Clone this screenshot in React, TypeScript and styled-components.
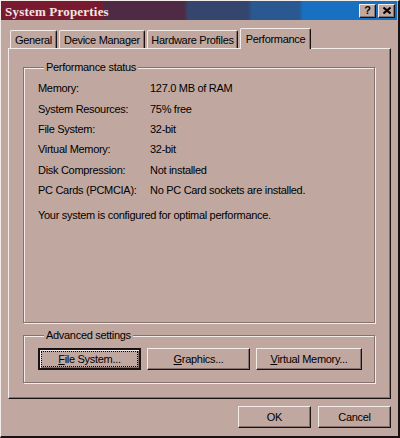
import { Fragment } from "react";
import styled, { createGlobalStyle, css } from "styled-components";

const FACE = "#c0a8a0";
const LIGHT = "#f4ece8";
const SHADOW = "#847270";
const DARK = "#1a1212";

const GlobalStyle = createGlobalStyle`
  html, body {
    margin: 0;
    padding: 0;
    background: ${FACE};
  }
  body {
    font-family: "Liberation Sans", Arial, sans-serif;
    font-size: 11px;
    letter-spacing: -0.3px;
    color: #000;
  }
`;

const Window = styled.div`
  box-sizing: border-box;
  width: 400px;
  height: 438px;
  background: ${FACE};
  border-left: 1px solid ${LIGHT};
  border-top: 1px solid ${LIGHT};
  border-right: 2px solid ${DARK};
  border-bottom: 2px solid ${DARK};
  display: flex;
  flex-direction: column;
`;

const TitleBar = styled.div`
  height: 19px;
  margin-right: 1px;
  display: flex;
  align-items: center;
  justify-content: space-between;
  padding: 0 2px 0 4px;
  background: linear-gradient(
    90deg,
    #7a1a30 0 100px,
    #4f2a44 104px 183px,
    #34466e 187px 247px,
    #2a5890 251px 298px,
    #1870c0 302px
  );
`;

const Title = styled.span`
  font-family: "Liberation Serif", "Times New Roman", serif;
  font-weight: bold;
  font-size: 13px;
  letter-spacing: 0.2px;
  padding-top: 2px;
  color: #f2e6e0;
`;

const CaptionButtons = styled.div`
  display: flex;
  gap: 2px;
`;

const CaptionButton = styled.div`
  box-sizing: border-box;
  width: 17px;
  height: 14px;
  background: ${FACE};
  border-top: 1px solid ${LIGHT};
  border-left: 1px solid ${LIGHT};
  border-right: 1px solid ${DARK};
  border-bottom: 1px solid ${DARK};
  box-shadow: inset -1px -1px 0 ${SHADOW};
  display: flex;
  align-items: center;
  justify-content: center;
  font-weight: bold;
  font-size: 11px;
  line-height: 1;
  color: #000;
`;

const Body = styled.div`
  flex: 1;
  display: flex;
  flex-direction: column;
  padding: 8px 6px 0 7px;
`;

const TabStrip = styled.div`
  height: 20px;
  display: flex;
  align-items: flex-end;
  gap: 2px;
  padding-left: 2px;
`;

const Tab = styled.div<{ $w: number; $active?: boolean }>`
  box-sizing: border-box;
  width: ${(p) => p.$w}px;
  height: 18px;
  padding-top: 3px;
  text-align: center;
  background: ${FACE};
  border-left: 1px solid ${LIGHT};
  border-top: 1px solid ${LIGHT};
  border-right: 1px solid ${DARK};
  border-radius: 2px 2px 0 0;
  box-shadow: inset -1px 0 0 ${SHADOW};
  white-space: nowrap;
  ${(p) =>
    p.$active &&
    css`
      height: 21px;
      margin-bottom: -1px;
      padding-top: 4px;
      position: relative;
      z-index: 1;
    `}
`;

const Panel = styled.div`
  box-sizing: border-box;
  width: 383px;
  height: 351px;
  border-left: 1px solid ${LIGHT};
  border-top: 1px solid ${LIGHT};
  border-right: 1px solid ${DARK};
  border-bottom: 1px solid ${DARK};
  box-shadow: inset -1px -1px 0 ${SHADOW};
  display: flex;
  flex-direction: column;
  gap: 6px;
  padding: 12px 15px 15px 14px;
`;

const Group = styled.fieldset<{ $grow?: boolean }>`
  margin: 0;
  min-width: 0;
  border: 1px solid ${SHADOW};
  box-shadow: inset 1px 1px 0 ${LIGHT}, 1px 1px 0 ${LIGHT};
  ${(p) =>
    p.$grow &&
    css`
      flex: 1;
    `}
`;

const Legend = styled.legend`
  margin-left: 6px;
  padding: 0 2px;
  background: ${FACE};
  line-height: 13px;
`;

const StatusGroup = styled(Group)`
  padding: 4px 14px 0 14px;
`;

const InfoGrid = styled.div`
  display: grid;
  grid-template-columns: 112px 1fr;
  grid-auto-rows: 20.4px;
  align-items: center;
`;

const Message = styled.div`
  margin-top: 9px;
`;

const AdvancedGroup = styled(Group)`
  padding: 6px 0 12px 14px;
  display: flex;
  gap: 6px;
`;

const ButtonRow = styled.div`
  display: flex;
  gap: 6px;
`;

const Button = styled.div<{ $w: number; $default?: boolean }>`
  box-sizing: border-box;
  width: ${(p) => p.$w}px;
  height: 22px;
  padding: 2px;
  background: ${FACE};
  border-top: 1px solid ${LIGHT};
  border-left: 1px solid ${LIGHT};
  border-right: 1px solid ${DARK};
  border-bottom: 1px solid ${DARK};
  box-shadow: inset -1px -1px 0 ${SHADOW};
  display: flex;
  ${(p) =>
    p.$default &&
    css`
      border: 2px solid ${DARK};
      box-shadow: inset 1px 1px 0 ${LIGHT}, inset -1px -1px 0 ${SHADOW};
      padding: 1px;
    `}
`;

const ButtonLabel = styled.span<{ $focus?: boolean }>`
  flex: 1;
  display: flex;
  align-items: center;
  justify-content: center;
  border: 1px dotted ${(p) => (p.$focus ? "#000" : "transparent")};
  white-space: nowrap;
`;

const Key = styled.u`
  text-decoration-thickness: 1px;
`;

const Footer = styled.div`
  display: flex;
  justify-content: flex-end;
  gap: 7px;
  margin-top: 7px;
  width: 383px;
`;

const rows: [string, string][] = [
  ["Memory:", "127.0 MB of RAM"],
  ["System Resources:", "75% free"],
  ["File System:", "32-bit"],
  ["Virtual Memory:", "32-bit"],
  ["Disk Compression:", "Not installed"],
  ["PC Cards (PCMCIA):", "No PC Card sockets are installed."],
];

export default function App() {
  return (
    <>
      <GlobalStyle />
      <Window>
        <TitleBar>
          <Title>System Properties</Title>
          <CaptionButtons>
            <CaptionButton>?</CaptionButton>
            <CaptionButton>
              <svg width="8" height="7" viewBox="0 0 8 7">
                <path d="M0.5 0.5 L7.5 6.5 M7.5 0.5 L0.5 6.5" stroke="#000" strokeWidth="2" />
              </svg>
            </CaptionButton>
          </CaptionButtons>
        </TitleBar>
        <Body>
          <TabStrip>
            <Tab $w={47}>General</Tab>
            <Tab $w={86}>Device Manager</Tab>
            <Tab $w={91}>Hardware Profiles</Tab>
            <Tab $w={71} $active>
              Performance
            </Tab>
          </TabStrip>
          <Panel>
            <StatusGroup $grow>
              <Legend>Performance status</Legend>
              <InfoGrid>
                {rows.map(([k, v]) => (
                  <Fragment key={k}>
                    <span>{k}</span>
                    <span>{v}</span>
                  </Fragment>
                ))}
              </InfoGrid>
              <Message>Your system is configured for optimal performance.</Message>
            </StatusGroup>
            <AdvancedGroup>
              <Legend>Advanced settings</Legend>
              <ButtonRow>
                <Button $w={103} $default>
                  <ButtonLabel $focus>
                    <Key>F</Key>ile System...
                  </ButtonLabel>
                </Button>
                <Button $w={103}>
                  <ButtonLabel>
                    <Key>G</Key>raphics...
                  </ButtonLabel>
                </Button>
                <Button $w={106}>
                  <ButtonLabel>
                    <Key>V</Key>irtual Memory...
                  </ButtonLabel>
                </Button>
              </ButtonRow>
            </AdvancedGroup>
          </Panel>
          <Footer>
            <Button $w={73}>
              <ButtonLabel>OK</ButtonLabel>
            </Button>
            <Button $w={73}>
              <ButtonLabel>Cancel</ButtonLabel>
            </Button>
          </Footer>
        </Body>
      </Window>
    </>
  );
}
